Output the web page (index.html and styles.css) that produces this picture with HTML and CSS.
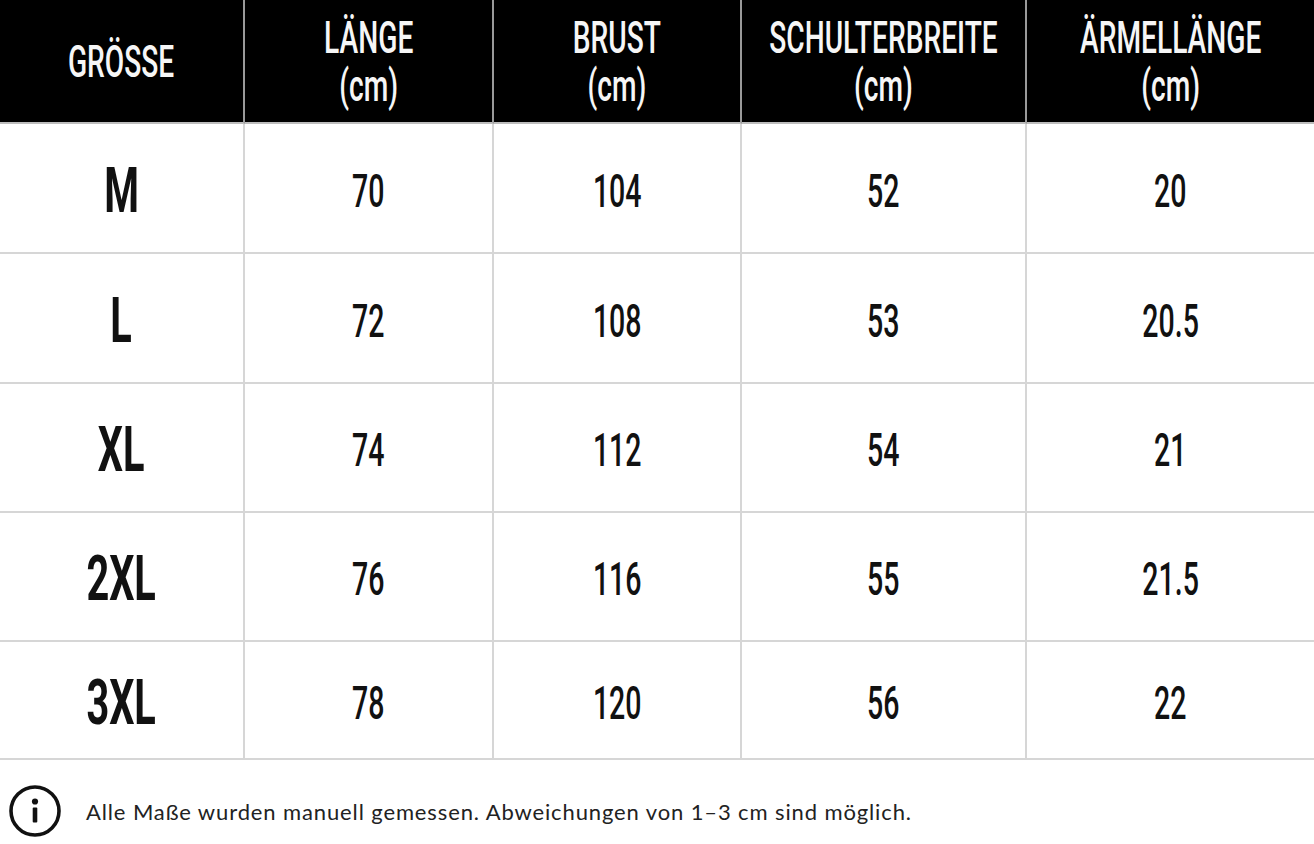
FILE: index.html
```html
<!DOCTYPE html>
<html lang="de">
<head>
<meta charset="utf-8">
<title>Größentabelle</title>
<link rel="stylesheet" href="styles.css">
</head>
<body>
<div class="chart">
  <div class="grid">
    <div class="cell head"><span class="sq">GRÖSSE</span></div>
    <div class="cell head"><span class="sq">LÄNGE<br>(cm)</span></div>
    <div class="cell head"><span class="sq">BRUST<br>(cm)</span></div>
    <div class="cell head"><span class="sq">SCHULTERBREITE<br>(cm)</span></div>
    <div class="cell head last"><span class="sq">ÄRMELLÄNGE<br>(cm)</span></div>

    <div class="cell size"><span class="sq">M</span></div>
    <div class="cell num"><span class="sq">70</span></div>
    <div class="cell num"><span class="sq">104</span></div>
    <div class="cell num"><span class="sq">52</span></div>
    <div class="cell num last"><span class="sq">20</span></div>

    <div class="cell size"><span class="sq">L</span></div>
    <div class="cell num"><span class="sq">72</span></div>
    <div class="cell num"><span class="sq">108</span></div>
    <div class="cell num"><span class="sq">53</span></div>
    <div class="cell num last"><span class="sq">20.5</span></div>

    <div class="cell size"><span class="sq">XL</span></div>
    <div class="cell num"><span class="sq">74</span></div>
    <div class="cell num"><span class="sq">112</span></div>
    <div class="cell num"><span class="sq">54</span></div>
    <div class="cell num last"><span class="sq">21</span></div>

    <div class="cell size"><span class="sq">2XL</span></div>
    <div class="cell num"><span class="sq">76</span></div>
    <div class="cell num"><span class="sq">116</span></div>
    <div class="cell num"><span class="sq">55</span></div>
    <div class="cell num last"><span class="sq">21.5</span></div>

    <div class="cell size"><span class="sq">3XL</span></div>
    <div class="cell num"><span class="sq">78</span></div>
    <div class="cell num"><span class="sq">120</span></div>
    <div class="cell num"><span class="sq">56</span></div>
    <div class="cell num last"><span class="sq">22</span></div>
  </div>
  <div class="note">
    <svg class="info" width="54" height="54" viewBox="0 0 54 54" aria-hidden="true">
      <circle cx="27" cy="27" r="24" fill="none" stroke="#111" stroke-width="3.6"/>
      <circle cx="27" cy="17.5" r="3.1" fill="#111"/>
      <rect x="24.7" y="23.5" width="4.6" height="15" rx="1" fill="#111"/>
    </svg>
    <p class="note-text">Alle Maße wurden manuell gemessen. Abweichungen von 1–3 cm sind möglich.</p>
  </div>
</div>
</body>
</html>
```

FILE: styles.css
```css
html, body {
  margin: 0;
  padding: 0;
  background: #ffffff;
}

.chart {
  width: 1314px;
  height: 844px;
  overflow: hidden;
}

.grid {
  display: grid;
  grid-template-columns: 245px 249px 248px 285px 287px;
  grid-template-rows: 124px 130px 130px 129px 129px 118px;
}

.cell {
  box-sizing: border-box;
  display: flex;
  align-items: center;
  justify-content: center;
  border-right: 2px solid #d6d6d6;
  border-bottom: 2px solid #d6d6d6;
  font-family: Roboto, "Liberation Sans", sans-serif;
  color: #111111;
}

.cell.last {
  border-right: none;
}

.sq {
  display: inline-block;
  text-align: center;
  transform: scaleX(0.64);
  white-space: nowrap;
}

.head {
  background: #000000;
  color: #f6f6f6;
  font-weight: 500;
  font-size: 44px;
  line-height: 48px;
  border-right-color: #9a9a9a;
  border-bottom-color: #bdbdbd;
  padding-top: 2px;
}

.size {
  font-weight: 700;
  font-size: 63px;
  line-height: 1;
  padding-top: 4px;
}

.size .sq {
  transform: scaleX(0.63);
}

.num {
  font-weight: 500;
  font-size: 46px;
  line-height: 1;
  padding-top: 5px;
}

.num .sq {
  transform: scaleX(0.62);
}

.note {
  display: flex;
  align-items: center;
  height: 85px;
  padding-left: 8px;
  padding-top: 17px;
  box-sizing: border-box;
}

.info {
  flex: none;
}

.note-text {
  margin: 0 0 0 24px;
  font-family: Lato, "Open Sans", sans-serif;
  font-size: 22px;
  color: #222222;
  letter-spacing: 0.88px;
}
```
